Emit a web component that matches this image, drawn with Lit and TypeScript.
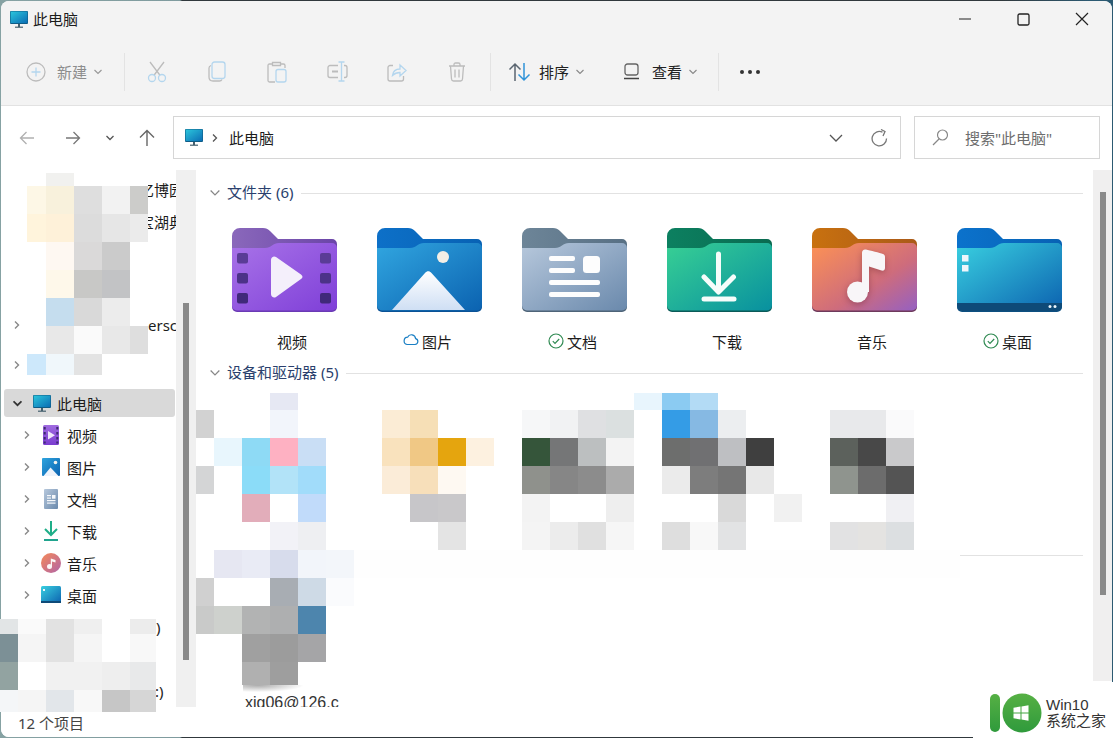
import { LitElement, html, css, svg } from "lit";
import { customElement } from "lit/decorators.js";

type Row = [number, number, [number, number, string][]];

const mosaic: Row[] = [
  // sidebar, upper block
  [173, 13, [[46, 28, "#f1f1ef"]]],
  [186, 28, [[27, 19, "#fdf7e6"], [46, 28, "#f8f1dc"], [74, 28, "#dedede"], [102, 28, "#f2f2f2"], [130, 18, "#ccccca"]]],
  [214, 28, [[27, 19, "#fff4dc"], [46, 28, "#fef1d9"], [74, 28, "#dcdcdc"], [102, 28, "#e6e6e6"], [130, 18, "#ebebeb"]]],
  [242, 28, [[46, 28, "#fef8f2"], [74, 28, "#dad9d9"], [102, 28, "#cbcbcb"]]],
  [270, 28, [[46, 28, "#fef8ea"], [74, 28, "#c8c8c6"], [102, 28, "#c2c3c5"]]],
  [298, 28, [[46, 28, "#c5ddee"], [74, 28, "#d9d9d9"], [102, 28, "#ececec"]]],
  [326, 28, [[46, 28, "#e8e8e8"], [74, 28, "#fafafa"], [102, 28, "#e8e8e8"], [130, 18, "#dedede"]]],
  [354, 21, [[27, 19, "#cde8fb"], [46, 28, "#f0f7fb"], [74, 28, "#e3e3e3"]]],
  // sidebar, lower block
  [619, 15, [[0, 18, "#e2e5e6"], [18, 28, "#fafafa"], [46, 28, "#e2e2e2"], [74, 28, "#efefef"], [102, 28, "#ffffff"], [130, 26, "#ececec"]]],
  [634, 28, [[0, 18, "#7c9096"], [18, 28, "#f5f5f5"], [46, 28, "#e2e2e2"], [74, 28, "#f5f5f5"], [102, 28, "#ffffff"], [130, 26, "#f8f8f8"]]],
  [662, 28, [[0, 18, "#92a3a1"], [18, 28, "#ffffff"], [46, 28, "#f1f1f1"], [74, 28, "#f1f1f1"], [102, 28, "#eeeeee"], [130, 26, "#e8e9ea"]]],
  [690, 22, [[0, 18, "#f4f6f8"], [18, 28, "#f5f5f5"], [46, 28, "#e2e6ea"], [74, 28, "#f8f8f8"], [102, 28, "#c6c6c6"], [130, 26, "#d6d6d6"]]],
  // main area
  [393, 17, [[270, 28, "#e6e8f3"], [634, 28, "#e8f5fd"], [662, 28, "#8bcbf2"], [690, 28, "#b3dbf5"]]],
  [410, 28, [[196, 18, "#d2d2d2"], [270, 28, "#f2f5fb"], [382, 28, "#fbecd5"], [410, 28, "#f6dfb6"], [522, 28, "#f6f7f8"], [550, 28, "#f1f2f3"], [578, 28, "#dfe0e2"], [606, 28, "#dbe0e0"], [662, 28, "#349ce6"], [690, 28, "#86b9e3"], [718, 28, "#eceef0"], [830, 28, "#e8e9eb"], [858, 28, "#e8e9eb"], [886, 28, "#fafafb"]]],
  [438, 28, [[214, 28, "#e8f6fd"], [242, 28, "#8edaf5"], [270, 28, "#feb1c2"], [298, 28, "#c9def5"], [382, 28, "#f9e2bd"], [410, 28, "#f0c885"], [438, 28, "#e5a50e"], [466, 28, "#fdf1e0"], [522, 28, "#35553a"], [550, 28, "#757677"], [578, 28, "#bcbfc0"], [606, 28, "#f3f3f3"], [662, 28, "#6d6e6d"], [690, 28, "#707072"], [718, 28, "#bebfc2"], [746, 28, "#3f3f3f"], [830, 28, "#5c615c"], [858, 28, "#484848"], [886, 28, "#c9c9cb"]]],
  [466, 28, [[196, 18, "#d4d5d6"], [242, 28, "#8bdcf8"], [270, 28, "#b2e3f8"], [298, 28, "#a1dcfa"], [382, 28, "#fbecd8"], [410, 28, "#f7dfba"], [438, 28, "#fef9f2"], [522, 28, "#8f918c"], [550, 28, "#868686"], [578, 28, "#8c8c8c"], [606, 28, "#ababab"], [662, 28, "#ebebeb"], [690, 28, "#7d7d7d"], [718, 28, "#757575"], [746, 28, "#e8e8e8"], [830, 28, "#8f948e"], [858, 28, "#6c6c6c"], [886, 28, "#545454"]]],
  [494, 28, [[242, 28, "#e2adba"], [298, 28, "#c1dbfa"], [410, 28, "#c7c6c9"], [438, 28, "#c9c8ca"], [522, 28, "#f3f3f3"], [606, 28, "#eeeeee"], [718, 28, "#d9d9d9"], [774, 28, "#f1f1f1"], [886, 28, "#f0f0f3"]]],
  [522, 28, [[270, 28, "#f2f2f7"], [298, 28, "#eeeff2"], [438, 28, "#e4e4e4"], [522, 28, "#f4f4f4"], [550, 28, "#ececec"], [578, 28, "#e0e0e0"], [606, 28, "#f6f6f6"], [662, 28, "#dedede"], [690, 28, "#f8f8f8"], [718, 28, "#e2e3e4"], [830, 28, "#e2e2e3"], [858, 28, "#e4e3e1"], [886, 28, "#dcdfe1"]]],
  [550, 28, [[196, 18, "#ffffff"], [214, 28, "#e6e7f2"], [242, 28, "#e9ebf5"], [270, 28, "#d7dcec"], [298, 28, "#f2f5fa"], [326, 28, "#f3f6fa"], [354, 606, "#fefefe"]]],
  [578, 28, [[196, 18, "#d0d0d0"], [270, 28, "#a8adb3"], [298, 28, "#cedae6"], [326, 28, "#fafbfd"]]],
  [606, 28, [[196, 18, "#c9cac9"], [214, 28, "#ced1cd"], [242, 28, "#b2b3b3"], [270, 28, "#aeafb0"], [298, 28, "#4d85ad"]]],
  [634, 28, [[242, 28, "#a0a0a0"], [270, 28, "#9c9c9c"], [298, 28, "#a5a5a7"]]],
  [662, 23, [[242, 28, "#b0b0b0"], [270, 28, "#9e9e9e"]]],
];

const monitor = (w: number, h: number, id: string) => html`<svg class="ico" width=${w} height=${h} viewBox="0 0 18 17">
  <defs><linearGradient id=${id} x1="0" y1="0" x2="1" y2="1"><stop offset="0" stop-color="#2cc6dc"/><stop offset="1" stop-color="#0b6db4"/></linearGradient></defs>
  <rect x="0" y="0" width="18" height="13" rx="1" fill="#0f5c86"/><rect x="0.6" y="0.5" width="16.8" height="11.5" fill="url(#${id})"/>
  <rect x="8" y="13" width="2" height="3" fill="#45606e"/><rect x="5" y="15.6" width="8" height="1.2" fill="#45606e"/></svg>`;

const chev = (dir: "r" | "d", color: string, size = 8, sw = 1.4) => html`<svg class="ico" width=${size} height=${size} viewBox="0 0 8 8" fill="none" stroke=${color} stroke-width=${sw}>
  <path d=${dir === "r" ? "M2 .5 5.5 4 2 7.5" : "M.5 2 4 5.5 7.5 2"}/></svg>`;

const folder = (id: string, c: { tab: string; tab2: string; edge: string; a: string; b: string; m?: string }, art: unknown) => html`<svg class="folder" width="105" height="84" viewBox="0 0 105 84">
  <defs>
    <linearGradient id="${id}f" x1="0" y1="0" x2="1" y2="1"><stop offset="0" stop-color=${c.a}/>${c.m ? svg`<stop offset=".6" stop-color=${c.m}/>` : ""}<stop offset="1" stop-color=${c.b}/></linearGradient>
    <linearGradient id="${id}t" x1="0" y1="0" x2="1" y2="0"><stop offset="0" stop-color=${c.tab}/><stop offset="1" stop-color=${c.tab2}/></linearGradient>
  </defs>
  <path d="M0 8a8 8 0 0 1 8-8H31c3 0 5 1 7 3l8 8H100a5 5 0 0 1 5 5V30H0Z" fill="url(#${id}t)"/>
  <rect x="0" y="60" width="105" height="24" rx="5" fill=${c.edge}/>
  <path d="M0 20H33c3 0 5-1 7-2.5 2-1.5 4-2.5 7-2.5H100a5 5 0 0 1 5 5V77.500a5 5 0 0 1-5 5H5a5 5 0 0 1-5-5Z" fill="url(#${id}f)"/>
  ${art}
</svg>`;

const sq = (x: number, y: number, f: string) => svg`<rect x=${x} y=${y} width="11" height="10.500" rx="2" fill=${f}/>`;

const tiles = [
  { name: "视频", status: "", icon: folder("v", { tab: "#8a68bb", tab2: "#6b45a8", edge: "#6a3ab4", a: "#a873e8", b: "#7f3fd8" }, svg`
    ${sq(5, 25, "#5a3c96")}${sq(5, 45, "#4c3288")}${sq(5, 65, "#40297a")}${sq(88, 25, "#5a3c96")}${sq(88, 45, "#4c3288")}${sq(88, 65, "#40297a")}
    <path d="M39 32c0-3 3-4.500 5-3l25 17.500c2 1.500 2 3 0 4.500L44 69c-2 1.500-5 0-5-3Z" fill="#f4effb"/>`) },
  { name: "图片", status: "cloud", icon: folder("p", { tab: "#0d70c8", tab2: "#0862b4", edge: "#0a5296", a: "#31a6e0", b: "#0b62b0" }, svg`
    <defs><linearGradient id="pm" x1="0" y1="0" x2="0" y2="1"><stop offset="0" stop-color="#ffffff"/><stop offset="1" stop-color="#cfdff4"/></linearGradient></defs>
    <circle cx="66" cy="29" r="6" fill="#f3efe6"/><path d="M15 82 48 45c2-2.500 4.500-2.500 6.500 0L88 82Z" fill="url(#pm)"/>`) },
  { name: "文档", status: "check", icon: folder("d", { tab: "#6d8598", tab2: "#587084", edge: "#4e6478", a: "#b7c8dc", b: "#6a89ac" }, svg`
    <g fill="#fdfdfd"><rect x="27" y="28" width="26" height="5" rx="2"/><rect x="27" y="40" width="26" height="5" rx="2"/><rect x="27" y="52" width="51" height="5" rx="2"/><rect x="27" y="64" width="51" height="5" rx="2"/><rect x="61" y="28" width="17" height="17" rx="3.500"/></g>`) },
  { name: "下载", status: "", icon: folder("l", { tab: "#0c8060", tab2: "#0a6a50", edge: "#0b5a58", a: "#38d094", b: "#08909f" }, svg`
    <g fill="none" stroke="#f7fdfb" stroke-width="5" stroke-linecap="round" stroke-linejoin="round"><path d="M51.500 26V63M37 49 51.500 64 66.500 49"/><path d="M37 71H67"/></g>`) },
  { name: "音乐", status: "", icon: folder("m", { tab: "#c8710f", tab2: "#aa5a18", edge: "#6e3a5c", a: "#fd9254", m: "#ce6c7c", b: "#9560c2" }, svg`
    <g style="filter:drop-shadow(0 2px 3px rgba(80,20,40,.35))"><circle cx="45.500" cy="64" r="10.500" fill="#f8f6f8"/><path d="M50 64V25c0-2.500 1.500-4 4-3.500 4 .8 14 3.500 17 4.500 1.500.5 2 1.500 2 3V40c0 2-1.500 3-3.500 2.500L57 38.500V64Z" fill="#f8f6f8"/></g>`) },
  { name: "桌面", status: "check", icon: folder("k", { tab: "#0b72cc", tab2: "#0862b4", edge: "#0d4f80", a: "#39d0e0", b: "#0c62b0" }, svg`
    <path d="M0 75H105V78a5 5 0 0 1-5 5H5a5 5 0 0 1-5-5Z" fill="#0e4a78"/>
    <rect x="5" y="27" width="6.500" height="6.500" fill="#eef6fb"/><rect x="5" y="37" width="6.500" height="6.500" fill="#eef6fb"/>
    <circle cx="93" cy="78.500" r="1.500" fill="#eaf4fb"/><circle cx="98" cy="78.500" r="1.500" fill="#eaf4fb"/>`) },
];

const cloud = html`<svg class="ico" width="16" height="13" viewBox="0 0 16 13" fill="none" stroke="#1a7fc4" stroke-width="1.200"><path d="M4 11.500H12a3 3 0 0 0 .6-5.900A4.200 4.200 0 0 0 4.600 4.200 3.700 3.700 0 0 0 4 11.500Z"/></svg>`;
const check = html`<svg class="ico" width="16" height="16" viewBox="0 0 16 16" fill="none" stroke="#2f8a52" stroke-width="1.200"><circle cx="8" cy="8" r="7"/><path d="M4.800 8.200 7 10.400 11.200 6"/></svg>`;

const G = "#bcbcbc";
const B = "#b4d6ee";
const tools = [
  html`<svg width="20" height="22" viewBox="0 0 20 22" fill="none" stroke-width="1.300"><path d="M3 1 12.800 14M17 1 7.200 14" stroke=${G}/><circle cx="5" cy="17" r="3.500" stroke=${B}/><circle cx="15" cy="17" r="3.500" stroke=${B}/></svg>`,
  html`<svg width="18" height="21" viewBox="0 0 18 21" fill="none" stroke-width="1.300"><path d="M3 4.500C1.500 5 1 6 1 7V16c0 2.500 1.500 4 4 4H11.500c1 0 2-.5 2.500-1.500" stroke=${G}/><rect x="4" y="1" width="13" height="16.500" rx="2.500" stroke=${B}/></svg>`,
  html`<svg width="20" height="22" viewBox="0 0 20 22" fill="none" stroke-width="1.300"><path d="M5 3H2.500C1.500 3 1 3.500 1 4.500V19.500c0 1 .5 1.500 1.500 1.500H8M14 3H16.500c1 0 1.500.5 1.500 1.500V7M5.500 1.500h8v3h-8Z" stroke=${G}/><rect x="9" y="8.500" width="10" height="12.500" rx="2" stroke=${B}/></svg>`,
  html`<svg width="21" height="21" viewBox="0 0 21 21" fill="none" stroke-width="1.300"><path d="M11 4.500H3C2 4.500 1 5.500 1 6.500V14.500c0 1 1 2 2 2H11M17 4.500H18c1 0 2 1 2 2V14.500c0 1-1 2-2 2H17" stroke=${G}/><path d="M5 10.500H11" stroke=${G} stroke-width="2"/><path d="M11.500 1H17.500M14.500 1V20M11.500 20H17.500" stroke=${B}/></svg>`,
  html`<svg width="20" height="20" viewBox="0 0 20 20" fill="none" stroke-width="1.300"><path d="M6 3.500H3C2 3.500 1 4.500 1 5.500V17c0 1 1 2 2 2H14.500c1 0 2-1 2-2V14" stroke=${G}/><path d="M5.500 13.500C6 9.500 8.500 7 13 7V3L19 8.500 13 14V10.500C9.500 10.500 7.500 11.500 5.500 13.500Z" stroke=${B}/></svg>`,
  html`<svg width="18" height="20" viewBox="0 0 18 20" fill="none" stroke=${G} stroke-width="1.300"><path d="M1 4H17M6 4V2.500C6 1.500 6.500 1 7.500 1H10.500C11.500 1 12 1.500 12 2.500V4M2.500 4 3.500 17c.1 1.300 1 2 2 2H12.500c1 0 1.900-.7 2-2L15.500 4M7 7.500V15.500M11 7.500V15.500"/></svg>`,
];

const sideIcons: Record<string, unknown> = {
  视频: html`<svg width="20" height="20" viewBox="0 0 20 20"><defs><linearGradient id="s1" x1="0" y1="0" x2="0" y2="1"><stop offset="0" stop-color="#a06be0"/><stop offset="1" stop-color="#7a3cd0"/></linearGradient></defs><rect x="2" y="0" width="16" height="20" rx="1.500" fill="url(#s1)"/><g fill="#3c2a70"><rect x="2.700" y="2" width="2" height="2.500"/><rect x="2.700" y="7" width="2" height="2.500"/><rect x="2.700" y="12" width="2" height="2.500"/><rect x="2.700" y="16.500" width="2" height="2"/><rect x="15.300" y="2" width="2" height="2.500"/><rect x="15.300" y="7" width="2" height="2.500"/><rect x="15.300" y="12" width="2" height="2.500"/><rect x="15.300" y="16.500" width="2" height="2"/></g><path d="M7 6 14 10.200 7 14.500Z" fill="#efe6fb"/></svg>`,
  图片: html`<svg width="20" height="20" viewBox="0 0 20 20"><defs><linearGradient id="s2" x1="0" y1="0" x2="1" y2="1"><stop offset="0" stop-color="#2ea4de"/><stop offset="1" stop-color="#0b62b0"/></linearGradient></defs><rect x="1" y="1" width="18" height="18" rx="1" fill="url(#s2)"/><circle cx="14.500" cy="5.500" r="1.800" fill="#f2f2ee"/><path d="M2.500 19 9.500 10.500 17.500 19Z" fill="#eef3fb"/></svg>`,
  文档: html`<svg width="20" height="20" viewBox="0 0 20 20"><defs><linearGradient id="s3" x1="0" y1="0" x2="1" y2="1"><stop offset="0" stop-color="#b7c8dc"/><stop offset="1" stop-color="#6a89ac"/></linearGradient></defs><rect x="3" y="0" width="14" height="20" rx="1" fill="url(#s3)"/><g fill="#f6f8fb"><rect x="6" y="6" width="4" height="1.200"/><rect x="6" y="8.500" width="4" height="1.200"/><rect x="11" y="6" width="3.500" height="3.700"/><rect x="6" y="11" width="8.500" height="1.200"/><rect x="6" y="13.500" width="8.500" height="1.200"/></g></svg>`,
  下载: html`<svg width="20" height="20" viewBox="0 0 20 20" fill="none" stroke="#1fae88" stroke-width="2"><path d="M10 0V13M4 8 10 14 16 8"/><path d="M3 19H17" stroke="#20a48e"/></svg>`,
  音乐: html`<svg width="20" height="20" viewBox="0 0 20 20"><defs><linearGradient id="s5" x1="0" y1="0" x2="1" y2="1"><stop offset="0" stop-color="#f68a58"/><stop offset="1" stop-color="#b064a8"/></linearGradient></defs><circle cx="10" cy="10" r="10" fill="url(#s5)"/><circle cx="8.500" cy="13.500" r="2.500" fill="#fbf7f7"/><path d="M9.800 13.500V5.500L14.500 7V9.500L11 8.500V13.500Z" fill="#fbf7f7"/></svg>`,
  桌面: html`<svg width="20" height="18" viewBox="0 0 20 18"><defs><linearGradient id="s6" x1="0" y1="0" x2="1" y2="1"><stop offset="0" stop-color="#39d0e0"/><stop offset="1" stop-color="#0c62b0"/></linearGradient></defs><rect x="0" y="0" width="20" height="17" rx="1.500" fill="url(#s6)"/><rect x="0" y="15" width="20" height="2" fill="#0e4a78"/><rect x="2" y="3" width="2" height="2" fill="#eef6fb"/></svg>`,
};

@customElement("app-root")
export class AppRoot extends LitElement {
  static styles = css`
    :host {
      display: block;
      position: relative;
      width: 1113px;
      height: 738px;
      overflow: hidden;
      background: linear-gradient(90deg, #86a2a3 0, #7f9b9e 180px, #30383c 182px, #30383c 1000px, #2c5a72 1090px);
      font-family: "Noto Sans", "Noto Sans CJK SC", sans-serif;
      font-size: 15px;
      color: #1c1c1c;
    }
    .ico { display: block; flex: none; }
    .window {
      width: 1113px;
      height: 738px;
      display: flex;
      flex-direction: column;
      background: #fff;
      clip-path: inset(1px round 8px);
    }
    .title {
      height: 38px;
      flex: none;
      display: flex;
      align-items: center;
      background: #f3f3f3;
      padding-left: 10px;
    }
    .title .name { margin: 0 0 2px 5px; }
    .caption { margin-left: auto; display: flex; padding-right: 2px; }
    .caption div { width: 58.5px; height: 38px; display: flex; align-items: center; justify-content: center; }
    .toolbar {
      height: 68px;
      flex: none;
      box-sizing: border-box;
      border-bottom: 1px solid #e2e2e2;
      background: #f3f3f3;
      display: flex;
      align-items: center;
      padding: 0 0 0 26px;
    }
    .new { width: 86px; display: flex; align-items: center; color: #8d8d8d; }
    .new .t { margin-left: 11px; }
    .new .c { margin-left: 7px; }
    .sep { width: 1px; height: 38px; background: #e3e3e3; flex: none; }
    .s1 { margin: 0 2px 0 12px; }
    .s2 { margin-left: 3px; }
    .s3 { margin-left: 21px; }
    .tool { width: 60px; display: flex; justify-content: center; }
    .cmd { display: flex; align-items: center; color: #222; }
    .sort { margin-left: 17px; }
    .sort .t { margin-left: 8px; }
    .view { margin-left: 39px; }
    .view .t { margin-left: 12px; }
    .cmd .c { margin-left: 7px; }
    .more { margin-left: 20px; }
    .nav {
      height: 64px;
      flex: none;
      box-sizing: border-box;
      padding: 10px 0 11px 4px;
      display: flex;
      align-items: flex-start;
    }
    .navb { height: 43px; display: flex; align-items: center; justify-content: center; flex: none; }
    .w46 { width: 46px; }
    .w28 { width: 28px; }
    .addr {
      margin-left: 3px;
      width: 728px;
      height: 43px;
      box-sizing: border-box;
      border: 1px solid #d6d6d6;
      display: flex;
      align-items: center;
      padding-left: 11px;
    }
    .addr .c1 { margin: 0 10px 0 8px; }
    .addr .right { margin-left: auto; display: flex; align-items: center; padding-right: 12px; gap: 28px; }
    .search {
      margin-left: 13px;
      width: 186px;
      height: 43px;
      box-sizing: border-box;
      border: 1px solid #d6d6d6;
      display: flex;
      align-items: center;
      padding-left: 17px;
      gap: 16px;
      color: #6d6d6d;
    }
    .body { flex: 1; min-height: 0; display: flex; overflow: hidden; }
    .side { width: 176px; flex: none; overflow: hidden; padding-top: 3px; box-sizing: border-box; }
    .row { height: 32px; display: flex; align-items: center; white-space: nowrap; overflow: hidden; box-sizing: border-box; }
    .gap { margin-bottom: 8px; }
    .far { margin-left: 148px; }
    .far span { margin-left: -9px; flex: none; }
    .chev { padding-left: 13px; }
    .chev .slot { width: 127px; flex: none; }
    .cut1 { padding-left: 156px; }
    .cut2 { padding-left: 155px; }
    .sel {
      height: 28px;
      margin: 3px 1px 2px 4px;
      background: #d9d9d9;
      border-radius: 3px;
      padding-left: 9px;
    }
    .sel .ico { margin-right: 6px; }
    .sel .cv { margin-right: 5px; }
    .child { padding-left: 23px; }
    .child .iw { width: 20px; height: 20px; margin: 0 6px 0 10px; flex: none; display: flex; align-items: center; justify-content: center; }
    .track { width: 20px; flex: none; background: #f0f0f0; display: flex; justify-content: center; position: relative; }
    .thumb { width: 6px; background: #8a8a8a; }
    .t-side { padding-top: 133px; box-sizing: border-box; }
    .t-side .thumb { height: 357px; }
    .t-main { padding-top: 22px; box-sizing: border-box; height: 511px; background: #f0efef; }
    .t-main .thumb { height: 403px; }
    .main { flex: 1; min-width: 0; padding: 13px 10px 0 14px; box-sizing: border-box; overflow: hidden; }
    .head { height: 20px; display: flex; align-items: center; color: #2a3f6d; }
    .head .t { margin: 0 0 3px 7px; }
    .head .line { flex: 1; height: 1px; background: #e2e2e2; margin-left: 8px; }
    .grid { display: grid; grid-template-columns: repeat(6, 145px); margin: 25px 0 12px 2px; row-gap: 20px; }
    .tile { display: flex; flex-direction: column; align-items: center; }
    .folder { display: block; }
    .label { height: 20px; margin-top: 19px; padding-right: 4px; display: flex; align-items: center; }
    .status { width: 19px; height: 16px; flex: none; }
    .drives { height: 163px; }
    .rule { height: 1px; margin: 9px 0 10px; background: #e2e2e2; }
    .net {
      padding: 127px 0 0 35px;
      font-family: "Liberation Sans", "Noto Sans CJK SC", sans-serif;
      font-size: 16px;
      line-height: 20px;
      color: #333;
      white-space: nowrap;
    }
    .status-bar { height: 31px; flex: none; display: flex; align-items: center; padding: 0 0 1px 18px; box-sizing: border-box; color: #444; background: #fff; position: relative; z-index: 1; }
    .mosaic { position: absolute; left: 0; top: 0; width: 1113px; height: 738px; pointer-events: none; }
    .mosaic i { position: absolute; display: block; }
    .shade {
      position: absolute;
      left: 243px;
      top: 685px;
      width: 60px;
      height: 7px;
      background: radial-gradient(ellipse at 25% 0, #aaaaaa 0, rgba(255,255,255,0) 72%);
    }
    .mark {
      position: absolute;
      right: 0;
      bottom: 0;
      width: 140px;
      height: 56px;
      background: #fff;
      box-sizing: border-box;
      padding: 11px 0 0 17px;
      display: flex;
      z-index: 2;
    }
    .mark .txt { margin-left: 4px; color: #333; font-family: "Liberation Sans", "Noto Sans CJK SC", sans-serif; }
    .mark .a { font-size: 15px; line-height: 15px; margin-top: 4px; }
    .mark .b { font-size: 15px; line-height: 17px; }
  `;

  render() {
    return html`
      <div class="window">
        <div class="title">
          ${monitor(18, 17, "m1")}
          <span class="name">此电脑</span>
          <div class="caption">
            <div><svg width="14" height="2" viewBox="0 0 14 2"><path d="M1 1H13" stroke="#222" stroke-width="1.200"/></svg></div>
            <div><svg width="13" height="13" viewBox="0 0 13 13" fill="none"><rect x="1" y="1" width="11" height="11" rx="1.500" stroke="#222" stroke-width="1.300"/></svg></div>
            <div><svg width="14" height="14" viewBox="0 0 14 14"><path d="M1 1 13 13M13 1 1 13" stroke="#222" stroke-width="1.200"/></svg></div>
          </div>
        </div>

        <div class="toolbar">
          <div class="new">
            <svg class="ico" width="20" height="20" viewBox="0 0 20 20" fill="none" stroke-width="1.300"><circle cx="10" cy="10" r="9" stroke=${G}/><path d="M10 5.500V14.500M5.500 10H14.500" stroke=${B}/></svg>
            <span class="t">新建</span>
            <span class="c">${chev("d", "#999", 8, 1.2)}</span>
          </div>
          <div class="sep s1"></div>
          ${tools.map((t) => html`<div class="tool">${t}</div>`)}
          <div class="sep s2"></div>
          <div class="cmd sort">
            <svg class="ico" width="23" height="20" viewBox="0 0 23 20" fill="none" stroke-width="1.500"><path d="M7 19V2M1.500 7.500 7 2 12.500 7.500" stroke="#5a6570"/><path d="M16 1V18M10.500 12.500 16 18 21.500 12.500" stroke="#2f93d8"/></svg>
            <span class="t">排序</span>
            <span class="c">${chev("d", "#888", 8, 1.1)}</span>
          </div>
          <div class="cmd view">
            <svg class="ico" width="17" height="17" viewBox="0 0 17 17" fill="none"><rect x="2" y="1" width="13" height="11" rx="2.500" stroke="#666" stroke-width="1.300"/><path d="M1 15.500H16" stroke="#444" stroke-width="1.500"/></svg>
            <span class="t">查看</span>
            <span class="c">${chev("d", "#888", 8, 1.1)}</span>
          </div>
          <div class="sep s3"></div>
          <svg class="more ico" width="22" height="6" viewBox="0 0 22 6" fill="#333"><circle cx="3" cy="3" r="2"/><circle cx="11" cy="3" r="2"/><circle cx="19" cy="3" r="2"/></svg>
        </div>

        <div class="nav">
          <div class="navb w46"><svg width="16" height="14" viewBox="0 0 16 14" fill="none" stroke="#b0b0b0" stroke-width="1.300"><path d="M15 7H1.500M7.500 1 1.500 7 7.500 13"/></svg></div>
          <div class="navb w46"><svg width="16" height="14" viewBox="0 0 16 14" fill="none" stroke="#777" stroke-width="1.300"><path d="M1 7H14.500M8.500 1 14.500 7 8.500 13"/></svg></div>
          <div class="navb w28">${chev("d", "#555", 8, 1.3)}</div>
          <div class="navb w46"><svg width="16" height="18" viewBox="0 0 16 18" fill="none" stroke="#666" stroke-width="1.400"><path d="M8 17V1.500M1 8.500 8 1.500 15 8.500"/></svg></div>
          <div class="addr">
            ${monitor(18, 17, "m2")}
            <span class="c1">${chev("r", "#555", 8, 1.3)}</span>
            <span>此电脑</span>
            <div class="right">
              <svg class="ico" width="14" height="8" viewBox="0 0 14 8" fill="none" stroke="#555" stroke-width="1.300"><path d="M1 1 7 7 13 1"/></svg>
              <svg class="ico" width="17" height="18" viewBox="0 0 17 18" fill="none" stroke="#777" stroke-width="1.300"><path d="M15.500 9.500A7.200 7.200 0 1 1 11.500 3.200"/><path d="M10 .5 14 2.500 12 7" /></svg>
            </div>
          </div>
          <div class="search">
            <svg class="ico" width="17" height="17" viewBox="0 0 17 17" fill="none" stroke="#888" stroke-width="1.200"><circle cx="10.500" cy="6" r="5"/><path d="M7 10 1 16"/></svg>
            <span>搜索"此电脑"</span>
          </div>
        </div>

        <div class="body">
          <div class="side">
            <div class="row far"><span>亿博园</span></div>
            <div class="row far"><span>宝湖典</span></div>
            <div class="row"></div>
            <div class="row gap"></div>
            <div class="row chev gap">${chev("r", "#888")}<span class="slot"></span>ersc</div>
            <div class="row chev gap">${chev("r", "#888")}</div>
            <div class="row sel">
              <span class="cv">${chev("d", "#333", 9, 1.5)}</span>
              ${monitor(18, 17, "m3")}
              此电脑
            </div>
            ${tiles.map(
              (t) => html`<div class="row child">
                ${chev("r", "#888")}
                <span class="iw">${sideIcons[t.name]}</span>
                ${t.name}
              </div>`
            )}
            <div class="row cut1">)</div>
            <div class="row"></div>
            <div class="row cut2">:)</div>
          </div>
          <div class="track t-side"><div class="thumb"></div></div>
          <div class="main">
            <div class="head">${chev("d", "#888", 10, 1)}<span class="t">文件夹 (6)</span><span class="line"></span></div>
            <div class="grid">
              ${tiles.map(
                (t) => html`<div class="tile">
                  ${t.icon}
                  <div class="label">
                    <span class="status">${t.status === "cloud" ? cloud : t.status === "check" ? check : ""}</span>
                    <span>${t.name}</span>
                  </div>
                </div>`
              )}
            </div>
            <div class="head">${chev("d", "#888", 10, 1)}<span class="t">设备和驱动器 (5)</span><span class="line"></span></div>
            <div class="drives"></div>
            <div class="rule"></div>
            <div class="net">xig06@126.c</div>
          </div>
          <div class="track t-main"><div class="thumb"></div></div>
        </div>

        <div class="status-bar">12 个项目</div>
      </div>

      <div class="mosaic">
        ${mosaic.flatMap(([y, h, cells]) =>
          cells.map(
            ([x, w, c]) => html`<i style="left:${x}px;top:${y}px;width:${w}px;height:${h}px;background:${c}"></i>`
          )
        )}
        <div class="shade"></div>
      </div>

      <div class="mark">
        <svg class="ico" width="52" height="40" viewBox="0 0 52 40">
          <defs><linearGradient id="wm" x1="0" y1="0" x2="0" y2="1"><stop offset="0" stop-color="#56b044"/><stop offset="1" stop-color="#2f9a3c"/></linearGradient></defs>
          <rect x="0" y="1" width="10" height="38" rx="5" fill="url(#wm)"/>
          <circle cx="32" cy="20" r="19.500" fill="url(#wm)"/>
          <g fill="#fff">
            <path d="M23.500 14.700 30.500 13.600V19.500H23.500Z"/><path d="M31.500 13.400 38.500 12.200V19.500H31.500Z"/>
            <path d="M23.500 20.500H30.500V26.400L23.500 25.300Z"/><path d="M31.500 20.500H38.500V27.800L31.500 26.600Z"/>
          </g>
        </svg>
        <div class="txt"><div class="a">Win10</div><div class="b">系统之家</div></div>
      </div>
    `;
  }
}
